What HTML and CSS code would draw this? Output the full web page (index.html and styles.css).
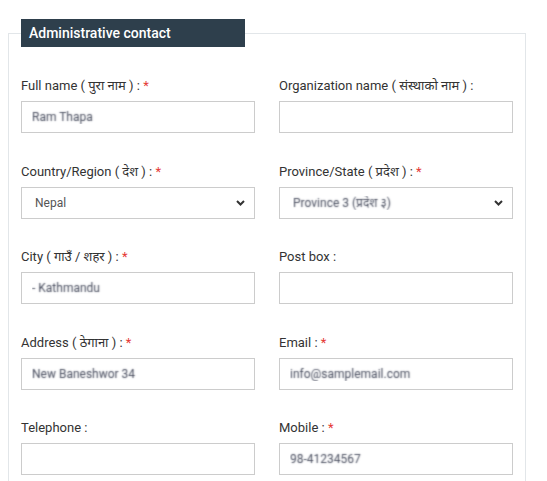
FILE: index.html
```html
<!DOCTYPE html>
<html>
<head>
<meta charset="utf-8">
<link rel="stylesheet" href="styles.css">
</head>
<body>
<fieldset class="box">
  <legend class="box-title">Administrative contact</legend>
  <div class="grid">
    <div class="field">
      <label class="lbl">Full name ( पुरा नाम ) : <span class="req">*</span></label>
      <input class="ctl masked" type="text" value="Ram Thapa">
    </div>
    <div class="field">
      <label class="lbl">Organization name ( संस्थाको नाम ) :</label>
      <input class="ctl" type="text" value="">
    </div>
    <div class="field">
      <label class="lbl">Country/Region ( देश ) : <span class="req">*</span></label>
      <div class="select-wrap">
        <select class="ctl sel"><option>Nepal</option></select>
        <svg class="chev" width="9" height="6" viewBox="0 0 9 6"><path d="M1 1 L4.5 4.5 L8 1" fill="none" stroke="#333" stroke-width="2"/></svg>
      </div>
    </div>
    <div class="field">
      <label class="lbl">Province/State ( प्रदेश ) : <span class="req">*</span></label>
      <div class="select-wrap">
        <select class="ctl sel masked"><option>Province 3 (प्रदेश ३)</option></select>
        <svg class="chev" width="9" height="6" viewBox="0 0 9 6"><path d="M1 1 L4.5 4.5 L8 1" fill="none" stroke="#333" stroke-width="2"/></svg>
      </div>
    </div>
    <div class="field">
      <label class="lbl">City ( गाउँ / शहर ) : <span class="req">*</span></label>
      <input class="ctl masked" type="text" value="- Kathmandu">
    </div>
    <div class="field">
      <label class="lbl">Post box :</label>
      <input class="ctl" type="text" value="">
    </div>
    <div class="field">
      <label class="lbl">Address ( ठेगाना ) : <span class="req">*</span></label>
      <input class="ctl masked" type="text" value="New Baneshwor 34">
    </div>
    <div class="field">
      <label class="lbl">Email : <span class="req">*</span></label>
      <input class="ctl masked" type="text" value="info@samplemail.com">
    </div>
    <div class="field">
      <label class="lbl">Telephone :</label>
      <input class="ctl" type="text" value="">
    </div>
    <div class="field">
      <label class="lbl">Mobile : <span class="req">*</span></label>
      <input class="ctl masked" type="text" value="98-41234567">
    </div>
  </div>
</fieldset>
</body>
</html>
```

FILE: styles.css
```css
html, body {
  margin: 0;
  padding: 0;
  background: #fff;
}
body {
  padding: 19px 0 0 8px;
  font-family: Roboto, "Noto Sans", "Liberation Sans", sans-serif;
  color: #333;
}
.box {
  width: 492px;
  margin: 0;
  padding: 0 12px 20px 12px;
  border: 1px solid #e2e6e9;
}
.box-title {
  margin: 0;
  padding: 0 8px;
  width: 224px;
  box-sizing: border-box;
  height: 28px;
  line-height: 28px;
  background: #2e3f4c;
  color: #fff;
  font-size: 14px;
  font-weight: 500;
}
.grid {
  display: grid;
  grid-template-columns: 234px 234px;
  column-gap: 24px;
  row-gap: 28.5px;
  padding-top: 29px;
}
.field {
  display: flex;
  flex-direction: column;
}
.lbl {
  font-size: 13px;
  line-height: 20px;
  height: 20px;
  margin-bottom: 5px;
  color: #333;
  white-space: nowrap;
}
.req {
  color: #e53935;
}
.ctl {
  box-sizing: border-box;
  width: 234px;
  height: 32px;
  margin: 0;
  border: 1px solid #ccc;
  border-radius: 0;
  background: #fff;
  font-family: Roboto, "Noto Sans", "Liberation Sans", sans-serif;
  font-size: 12px;
  color: #555;
  padding: 0 10px;
  outline: none;
}
.select-wrap {
  position: relative;
  width: 234px;
  height: 32px;
}
.sel {
  appearance: none;
  -webkit-appearance: none;
  padding-left: 13px;
  display: block;
}
.chev {
  position: absolute;
  right: 10px;
  top: 13px;
  pointer-events: none;
}
.masked {
  color: transparent;
  text-shadow: 0 0 1.5px #4a4f60;
}
```
